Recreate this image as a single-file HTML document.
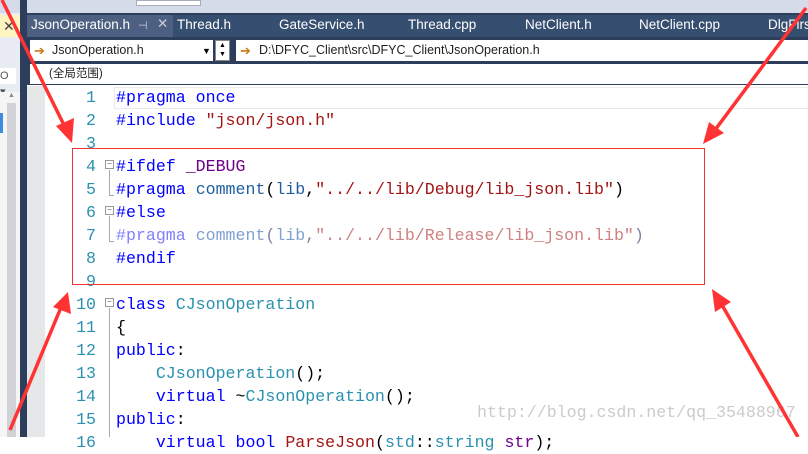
<!DOCTYPE html>
<html><head><meta charset="utf-8"><style>
*{margin:0;padding:0;box-sizing:border-box}
body{width:808px;height:437px;overflow:hidden;position:relative;background:#fff;font-family:"Liberation Sans","Noto Sans CJK SC",sans-serif}
.abs{position:absolute}
.code{font-family:"Liberation Mono",monospace;font-size:16.6px;white-space:pre;line-height:23px}
.ln{position:absolute;left:60px;width:36px;text-align:right;color:#2b91af;font-family:"Liberation Mono",monospace;font-size:16.6px;line-height:23px}
.k{color:#0000ff}.t{color:#2b91af}.s{color:#a31515}.m{color:#6f008a}.c{color:#1f5f9f}
.g .k{color:#8080ff}.g .s{color:#d08080}.g .c,.g .t{color:#80a0d0}
.fold{position:absolute;left:105px;width:9px;height:9px;border:1px solid #999;background:#fff;font-size:8px;line-height:6px;text-align:center;color:#555}
.vl{position:absolute;left:109px;width:1px;background:#aaa}
.tab{position:absolute;top:17px;font-size:13.5px;color:#fff}
</style></head><body>
<div class="abs" style="left:0;top:0;width:808px;height:15px;background:#d6dbe9"></div>
<div class="abs" style="left:136px;top:0;width:65px;height:6px;background:#fff;border:1px solid #aab"></div>
<div class="abs" style="left:20px;top:13px;width:788px;height:26px;background:#2d3e5c"></div>
<div class="abs" style="left:20px;top:15px;width:788px;height:22px;background:#364e6f"></div>
<div class="abs" style="left:27px;top:15px;width:146px;height:22px;background:#4d6082"></div>
<div class="tab" style="left:31px">JsonOperation.h</div>
<div class="tab" style="left:138px;font-size:11px;top:19px;color:#ccd">⊣</div>
<div class="tab" style="left:157px;top:16px;color:#ccd">✕</div>
<div class="tab" style="left:177px">Thread.h</div>
<div class="tab" style="left:279px">GateService.h</div>
<div class="tab" style="left:408px">Thread.cpp</div>
<div class="tab" style="left:525px">NetClient.h</div>
<div class="tab" style="left:639px">NetClient.cpp</div>
<div class="tab" style="left:768px">DlgFirs</div>
<div class="abs" style="left:0;top:13px;width:20px;height:424px;background:#e9ecf3"></div>
<div class="abs" style="left:0;top:15px;width:20px;height:22px;background:#fdf4bf;font-size:14px;color:#444;padding-left:3px;line-height:22px">✕</div>
<div class="abs" style="left:0;top:68px;width:16px;height:16px;background:#fff;font-size:11px;color:#555;line-height:16px">O ▾</div>
<div class="abs" style="left:0;top:92px;width:20px;height:345px;background:#f5f5f5"></div>
<div class="abs" style="left:0;top:113px;width:3px;height:20px;background:#3c8de0"></div>
<div class="abs" style="left:7px;top:103px;width:9px;height:334px;background:#d0d2d6"></div>
<div class="abs" style="left:7px;top:92px;width:9px;height:10px;color:#888;font-size:7px;text-align:center">▲</div>
<div class="abs" style="left:20px;top:0;width:7px;height:437px;background:#2d3e5c"></div>
<div class="abs" style="left:27px;top:37px;width:781px;height:26px;background:#2d3e5c"></div>
<div class="abs" style="left:30px;top:40px;width:183px;height:21px;background:#fff;font-size:12.5px;line-height:21px;padding-left:22px;color:#1e1e1e">JsonOperation.h</div>
<div class="abs" style="left:34px;top:40px;color:#c77b18;font-size:13px;line-height:21px">➔</div>
<div class="abs" style="left:202px;top:41px;font-size:9px;line-height:20px">▼</div>
<div class="abs" style="left:215px;top:40px;width:15px;height:21px;background:#fff;border:1px solid #888;font-size:7px;line-height:9px;text-align:center">▲<br>▼</div>
<div class="abs" style="left:236px;top:40px;width:572px;height:21px;background:#fff;font-size:12.5px;line-height:21px;padding-left:23px;color:#1e1e1e">D:\DFYC_Client\src\DFYC_Client\JsonOperation.h</div>
<div class="abs" style="left:240px;top:40px;color:#c77b18;font-size:13px;line-height:21px">➔</div>
<div class="abs" style="left:27px;top:63px;width:781px;height:22px;background:#2d3e5c"></div>
<div class="abs" style="left:30px;top:64px;width:778px;height:20px;background:#fff;font-size:11.5px;line-height:20px;padding-left:19px;color:#1e1e1e">(全局范围)</div>
<div class="abs" style="left:27px;top:86px;width:18px;height:351px;background:#e6e7e8"></div>
<div class="abs" style="left:45px;top:86px;width:763px;height:351px;background:#fff"></div>
<div class="abs" style="left:114px;top:87px;width:694px;height:22px;border:1px solid #eaeaea;border-right:none"></div>
<div class="ln" style="top:86px">1<br>2<br>3<br>4<br>5<br>6<br>7<br>8<br>9<br>10<br>11<br>12<br>13<br>14<br>15<br>16</div>
<div class="fold" style="top:160px">−</div><div class="vl" style="top:170px;height:26px"></div><div class="abs" style="left:109px;top:195px;width:5px;height:1px;background:#aaa"></div>
<div class="fold" style="top:206px">−</div><div class="vl" style="top:216px;height:26px"></div><div class="abs" style="left:109px;top:241px;width:5px;height:1px;background:#aaa"></div>
<div class="fold" style="top:298px">−</div><div class="vl" style="top:308px;height:129px"></div>
<div class="abs code" style="left:116px;top:86px"><span class="k">#pragma once</span>
<span class="k">#include</span> <span class="s">"json/json.h"</span>

<span class="k">#ifdef</span> <span class="m">_DEBUG</span>
<span class="k">#pragma</span> <span class="c">comment</span>(<span class="c">lib</span>,<span class="s">"../../lib/Debug/lib_json.lib"</span>)
<span class="k">#else</span>
<span class="g"><span class="k">#pragma</span> <span class="c">comment</span><span style="color:#8080a0">(</span><span class="c">lib</span><span style="color:#8080a0">,</span><span class="s">"../../lib/Release/lib_json.lib"</span><span style="color:#8080a0">)</span></span>
<span class="k">#endif</span>

<span class="k">class</span> <span class="t">CJsonOperation</span>
{
<span class="k">public</span>:
    <span class="t">CJsonOperation</span>();
    <span class="k">virtual</span> ~<span class="t">CJsonOperation</span>();
<span class="k">public</span>:
    <span class="k">virtual</span> <span class="k">bool</span> <span class="s">ParseJson</span>(<span class="t">std</span>::<span class="t">string</span> <span class="m">str</span>);</div>
<div class="abs" style="left:72px;top:148px;width:633px;height:137px;border:1.5px solid #e33"></div>
<div class="abs" style="left:477px;top:403px;font-family:'Liberation Mono',monospace;font-size:16.6px;color:#cbcbcb">http://blog.csdn.net/qq_35488967</div>
<svg class="abs" style="left:0;top:0" width="808" height="437">
<g stroke="#f33" stroke-width="3.5" fill="#f33">
<line x1="2" y1="0" x2="64" y2="125"/>
<polygon points="72,143 56,126 74,118" stroke="none"/>
<line x1="806" y1="8" x2="715" y2="130"/>
<polygon points="703,144 709,122 724,133" stroke="none"/>
<line x1="10" y1="430" x2="62" y2="305"/>
<polygon points="68,292 71,314 53,307" stroke="none"/>
<line x1="798" y1="437" x2="722" y2="305"/>
<polygon points="712,289 731,302 715,312" stroke="none"/>
</g></svg>
</body></html>
